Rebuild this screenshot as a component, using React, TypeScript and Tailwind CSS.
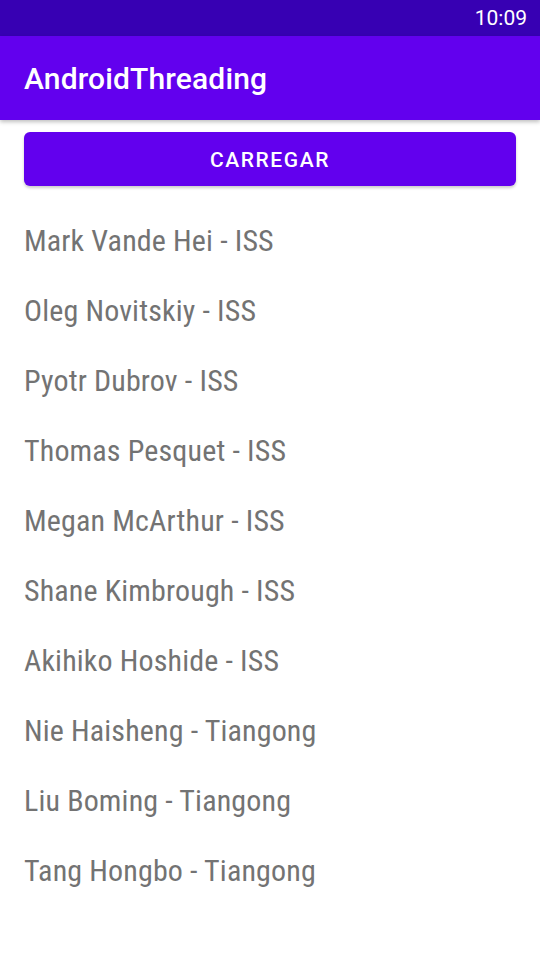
const astronauts = [
  "Mark Vande Hei - ISS",
  "Oleg Novitskiy - ISS",
  "Pyotr Dubrov - ISS",
  "Thomas Pesquet - ISS",
  "Megan McArthur - ISS",
  "Shane Kimbrough - ISS",
  "Akihiko Hoshide - ISS",
  "Nie Haisheng - Tiangong",
  "Liu Boming - Tiangong",
  "Tang Hongbo - Tiangong",
];

export default function App() {
  return (
    <div className="w-[540px] h-[960px] bg-white overflow-hidden font-['Roboto',sans-serif]">
      {/* Status bar */}
      <div className="h-[36px] bg-[#3700b3] flex items-center justify-end pr-[13px]">
        <span className="text-white text-[21px] leading-none">10:09</span>
      </div>

      {/* Toolbar */}
      <div className="relative z-10 h-[84px] bg-[#6200ee] flex items-center px-[24px] shadow-[0_2px_4px_rgba(0,0,0,0.25)]">
        <h1 className="text-white text-[30px] font-medium leading-none tracking-[0.005em] pt-[2px]">AndroidThreading</h1>
      </div>

      <div className="px-[24px] pt-[12px]">
        <button className="w-full h-[54px] pt-[3px] rounded-[6px] bg-[#6200ee] text-white text-[21px] font-medium uppercase tracking-[0.075em] shadow-[0_2px_3px_rgba(0,0,0,0.2)]">
          Carregar
        </button>

        <ul className="mt-[19px]">
          {astronauts.map((name) => (
            <li
              key={name}
              className="h-[70px] flex items-center text-[30px] tracking-[0.005em] text-[#737373] font-['Roboto_Condensed','Roboto',sans-serif] [font-stretch:condensed]"
            >
              {name}
            </li>
          ))}
        </ul>
      </div>
    </div>
  );
}
